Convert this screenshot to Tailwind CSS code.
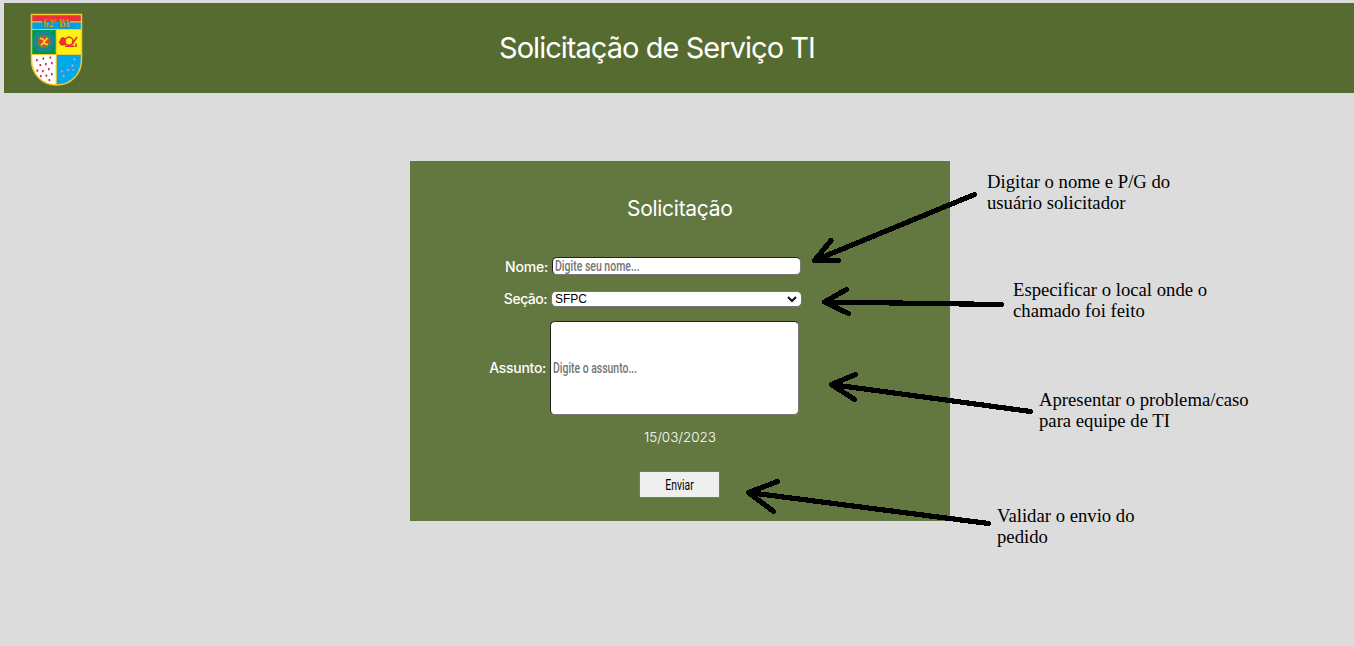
<!DOCTYPE html>
<html lang="pt-BR">
<head>
<meta charset="utf-8">
<title>Solicitação de Serviço TI</title>
<script src="https://cdn.jsdelivr.net/npm/@tailwindcss/browser@4"></script>
</head>
<body class="relative h-[646px] overflow-hidden bg-[#dcdcdc] pt-[3px] pl-1 font-['Inter','Liberation_Sans',sans-serif] text-white">
<header class="flex h-[90px] bg-[#556b2f]">
  <svg class="mt-[10px] ml-[26px] h-[74px] w-[53px] shrink-0" viewBox="0 0 53 74">
    <defs><clipPath id="shield"><path d="M1.500 1.500H51.500V47C51.500 61 41 72 26.500 72S1.500 61 1.500 47Z"/></clipPath></defs>
    <g clip-path="url(#shield)">
      <path fill="#fff" d="M0 0h53v74H0z"/>
      <path fill="#ed3237" d="M0 0h53v9H0z"/><path fill="#00a0e3" d="M0 9h53v7H0z"/>
      <path fill="#009846" d="M0 17h26v24H0z"/><path fill="#fff212" d="M26 17h27v24H26z"/>
      <path fill="#00a9ec" d="M26 41h27v33H26z"/>
      <path stroke="#f0c92c" stroke-width="1.200" d="M0 16.500h53M0 41.500h53M26.300 16v58M0 8.800h12M40 8.800h13"/>
    </g>
    <path d="M1.500 1.500H51.500V47C51.500 61 41 72 26.500 72S1.500 61 1.500 47Z" fill="none" stroke="#f0c92c" stroke-width="1.500"/>
    <text x="13.500" y="13.500" font-family="Liberation Serif" font-weight="bold" font-size="12.500" fill="#e0a820" stroke="#7a5520" stroke-width=".25" textLength="26" lengthAdjust="spacingAndGlyphs">62º BI</text>
    <circle cx="14" cy="28.700" r="9.300" fill="#12945a" stroke="#1f7fc0" stroke-width="2.200"/>
    <circle cx="14" cy="28.700" r="6" fill="#3da04c" stroke="#8f7a3a" stroke-width="1"/>
    <path d="M14 23v11.500M8.500 28.700h11" stroke="#e5402f" stroke-width="3.200"/><path d="M10 25.500q4 0 4 3t4 3M11 32.500l6.500-7.500" fill="none" stroke="#f3d52c" stroke-width="1.700"/>
    <g fill="none" stroke="#e63329" stroke-width="1.600"><circle cx="39" cy="28.300" r="4"/><path d="M35 33.300h9.500M41.500 32l5.500-8M46 30.500v3.500"/></g>
    <path d="M30.500 25.500q2.500-3 5 0v6.500q-2.500 1-5 0l-.8-1.500-1.200-1.500 1.200-1Z" fill="#e63329"/>
    <g fill="#d5304a"><path d="M6 46h1.700v2.300H6zM12.500 44.500h1.700v2.300h-1.700zM19.500 43.500h1.700v2.300h-1.700zM9.500 51h1.700v2.300H9.500zM15 50h1.700v2.300H15zM21 49h1.700v2.300H21zM6.500 56.500h1.700v2.300H6.500zM12 57h1.700v2.300H12zM18 55h1.700v2.300H18zM10 62h1.700v2.300H10zM15.500 61.500h1.700v2.300h-1.700zM21 60h1.700v2.300H21zM18.500 66h1.700v2.300h-1.700z"/></g>
    <g fill="#8fb3dc" stroke="#3e78b8" stroke-width=".4"><circle cx="44.500" cy="46.500" r="1.400"/><circle cx="42.500" cy="52.500" r="1.600"/><circle cx="43.500" cy="57" r="1.300"/><circle cx="38" cy="57" r="1.600"/><circle cx="32" cy="58.500" r="1.400"/><circle cx="33.500" cy="63" r="1.500"/></g>
  </svg>
  <h1 class="mt-[26px] ml-[416px] whitespace-nowrap text-[29px] leading-[38px] tracking-[-0.96px]">Solicitação de Serviço TI</h1>
</header>

<main class="mt-[68px] ml-[406px] h-[360px] w-[540px] bg-[#637840]">
  <form class="flex flex-col">
    <h2 class="mt-9 ml-[217px] h-6 whitespace-nowrap text-[21px] leading-6 tracking-[-0.28px]">Solicitação</h2>
    <div class="mt-9 flex h-[18px]">
      <label class="w-[138px] text-right text-sm leading-[19px] font-medium tracking-[-0.2px]">Nome:</label>
      <div class="ml-1 w-[249px] rounded-[5px] border border-t-[#222] border-r-[#777] border-b-[#777] border-l-[#222] bg-white pl-[2px]">
        <span class="block w-max origin-left scale-x-[.75] text-[14px] leading-[17px] font-medium whitespace-nowrap text-[#757575] font-['Roboto',sans-serif]">Digite seu nome...</span>
      </div>
    </div>
    <div class="mt-4 flex h-4">
      <label class="w-[137px] text-right text-sm leading-4 font-medium tracking-[-0.5px]">Seção:</label>
      <div class="ml-1 flex w-[251px] items-center justify-between rounded-[5px] border border-[#767676] bg-white pr-1 pl-[3px]">
        <span class="text-[12px] leading-[14px] text-black font-['Liberation_Sans',sans-serif]">SFPC</span>
        <svg class="h-[7px] w-[10px]" viewBox="0 0 10 7" fill="none" stroke="#111" stroke-width="2"><path d="M1 1l4 4 4-4"/></svg>
      </div>
    </div>
    <div class="mt-[14px] flex h-[94px]">
      <label class="w-[136px] text-right text-sm leading-[93px] font-medium tracking-[-0.3px]">Assunto:</label>
      <div class="ml-1 w-[249px] rounded-[5px] border border-t-[#222] border-r-[#777] border-b-[#777] border-l-[#222] bg-white pl-[2px]">
        <span class="block w-max origin-left scale-x-[.745] text-[14px] leading-[92px] font-medium whitespace-nowrap text-[#757575] font-['Roboto',sans-serif]">Digite o assunto...</span>
      </div>
    </div>
    <p class="mt-[12px] ml-[234px] h-5 whitespace-nowrap text-[13.500px] leading-5 font-light tracking-[-0.05px]">15/03/2023</p>
    <button type="button" class="mt-[24px] ml-[229px] h-[27px] w-[81px] border border-[#767676] bg-[#efefef] text-black"><span class="block text-[14px] leading-[24px] scale-x-[.74] font-['Roboto',sans-serif]">Enviar</span></button>
  </form>
</main>

<svg class="absolute top-0 left-0 h-[646px] w-[1354px]" viewBox="0 0 1354 646" fill="none" stroke="#000" stroke-width="5.200" stroke-linecap="round" stroke-linejoin="round" shape-rendering="crispEdges">
  <path d="M974.500 194.500L814.500 260.500M831 240.500L814.500 260.500H838.500"/>
  <path d="M1001.500 304.500L824.500 302M846.500 289.500L824.500 302L848.500 313.500"/>
  <path d="M1030.500 411.500L831.500 384.500M855.500 374.500L831.500 384.500L854.500 399.500"/>
  <path d="M988.500 523.500L748.500 492.500M777.500 481.500L748.500 492.500L773.500 511.500"/>
</svg>
<div class="text-[18.700px] leading-[21px] whitespace-nowrap text-black font-['Liberation_Serif',serif]">
  <p class="absolute top-[171px] left-[987px]">Digitar o nome e P/G do<br>usuário solicitador</p>
  <p class="absolute top-[279px] left-[1013px]">Especificar o local onde o<br>chamado foi feito</p>
  <p class="absolute top-[389px] left-[1039px]">Apresentar o problema/caso<br>para equipe de TI</p>
  <p class="absolute top-[505px] left-[997px]">Validar o envio do<br>pedido</p>
</div>
</body>
</html>
